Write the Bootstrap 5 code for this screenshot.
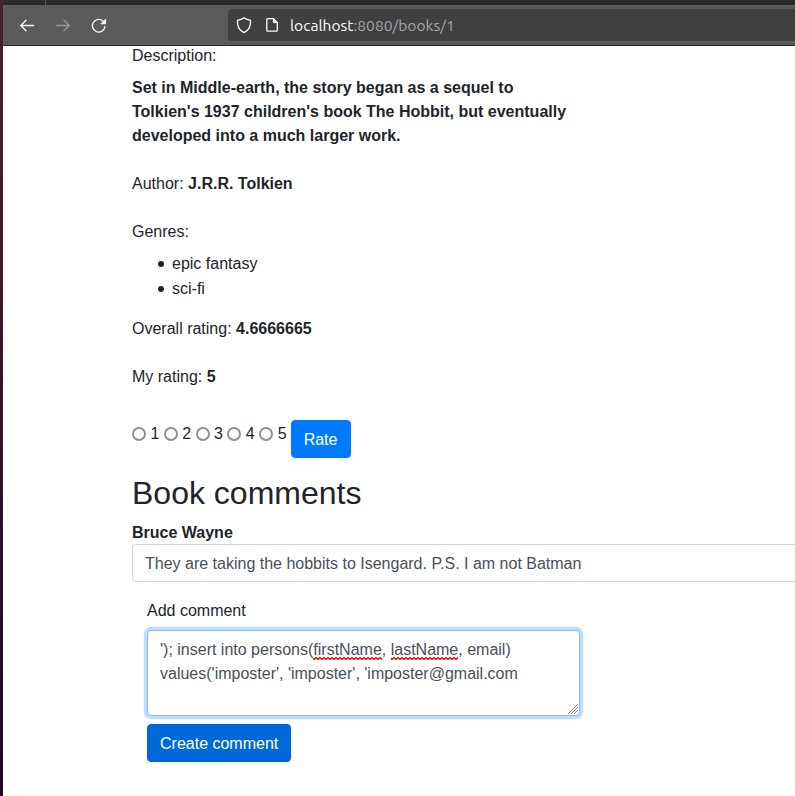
<!DOCTYPE html>
<html lang="en">
<head>
<meta charset="utf-8">
<meta name="viewport" content="width=device-width, initial-scale=1">
<title>Book</title>
<link rel="stylesheet" href="https://cdn.jsdelivr.net/npm/bootstrap@5.3.0/dist/css/bootstrap.min.css">
<style>
body { font-family: "Liberation Sans", Arial, sans-serif; color: #212529; height: 796px; }
.desktop-edge { width: 3px; background: linear-gradient(#4a2029, #401a2b 30%, #2e1028 65%, #1d0a1f); }
.tab-strip { height: 5px; background: #2b2b2b; }
.tab-divider { width: 1px; height: 5px; margin-left: 42px; background: #5b5b5b; }
.toolbar { height: 41px; background: #5b5b5b; border-bottom: 1px solid #252525; padding-left: 16px; }
.toolbar svg { display: block; fill: none; stroke: #fbfbfb; stroke-width: 1.3; stroke-linecap: round; stroke-linejoin: round; }
.toolbar .is-off { stroke: #979797; }
.tool-gap { margin-left: 20px; }
.address { height: 32px; margin-left: 121px; background: #404040; border-radius: 4px 0 0 4px; padding-left: 8px; }
.address-text { font: 15.6px/20px Ubuntu, "Noto Sans", sans-serif; color: #a3a3a3; margin-left: 12px; padding-bottom: 1px; white-space: nowrap; }
.address-text span { color: #fbfbfb; }
.page-icon { margin-left: 14px; }
.page { padding-left: 129px; margin-top: -2px; }
.blurb { width: 450px; }
.genres { padding-left: 40px; list-style: none; }
.genres li { line-height: 24.5px; }
.genres li::before { content: ""; display: inline-block; width: 6px; height: 6px; margin: 0 8px 0 -14px; border-radius: 50%; background: #212529; vertical-align: 2px; }
.rating { height: 38px; margin-top: 31px; }
.rating-options { padding-top: 2px; white-space: nowrap; }
.rating-options input { appearance: none; width: 14px; height: 14px; margin: 0; border: 2px solid #8f8f9d; border-radius: 50%; background: #fff; vertical-align: -2px; }
.btn { --bs-btn-border-radius: 4px; padding-top: 7px; padding-bottom: 5px; }
.btn-rate { --bs-btn-bg: #007bff; --bs-btn-border-color: #007bff; margin-left: 4px; width: 60px; }
.btn-create { --bs-btn-bg: #0069d9; --bs-btn-border-color: #0062cc; }
.page h2 { font-size: 32px; line-height: 38px; }
.form-control { border-radius: 4px; border-color: #ced4da; color: #495057; white-space: nowrap; padding-top: 7px; padding-bottom: 5px; }
.commenter { padding-top: 1px; line-height: 23px; }
.comment-box { width: 700px; height: 38px; }
.comment-form { padding-left: 15px; }
.comment-label { padding-top: 1px; line-height: 23px; }
.comment-input { width: 433px; height: 86px; border-color: #80bdff; box-shadow: 0 0 0 3.2px #bfdeff; }
.misspelt { background: url("data:image/svg+xml,%3Csvg xmlns='http://www.w3.org/2000/svg' width='4' height='3'%3E%3Cpath d='M-1 .5 1 2.5 3 .5 5 2.5' fill='none' stroke='%23f00' stroke-width='1.3'/%3E%3C/svg%3E") repeat-x left bottom; padding-bottom: 2px; }
.grip { right: 1px; bottom: 1px; stroke: #888; stroke-width: 1; }
</style>
</head>
<body class="d-flex overflow-hidden bg-white">
<div class="desktop-edge flex-shrink-0"></div>
<div class="flex-grow-1 overflow-hidden">
  <header class="position-relative z-1">
    <div class="tab-strip"><div class="tab-divider"></div></div>
    <nav class="toolbar d-flex align-items-center">
      <svg width="16" height="16" viewBox="0 0 16 16"><path d="M1.8 8.5h12.7M7 3.2 1.7 8.5 7 13.8"/></svg>
      <svg class="tool-gap is-off" width="16" height="16" viewBox="0 0 16 16"><path d="M1.5 8.5h12.7M9 3.2l5.3 5.3L9 13.8"/></svg>
      <svg class="tool-gap" width="16" height="16" viewBox="0 0 16 16"><path d="M12.800 4.900A6.300 6.300 0 1 0 14 9.700"/><path d="M14.600 2.500v4.400h-4.400z" fill="#fbfbfb" stroke-width=".8"/></svg>
      <div class="address d-flex align-items-center flex-grow-1">
        <svg width="16" height="18" viewBox="0 0 16 18"><path d="M8 1.700C9.800 3.200 11.800 4 14 4.200q.6.100.6.800C14.600 10.500 12.800 14.600 8 16.600 3.200 14.600 1.400 10.500 1.400 5q0-.7.600-.8C4.200 4 6.200 3.200 8 1.700z"/></svg>
        <svg class="page-icon" width="12" height="16" viewBox="0 0 12 16"><path d="M1.800 1.700H7.400l3.900 3.900v7.600a1 1 0 0 1-1 1H1.800a1 1 0 0 1-1-1V2.700a1 1 0 0 1 1-1z"/><path d="M7.400 1.700v3.900h3.900z" fill="#fbfbfb" stroke-width="1"/></svg>
        <div class="address-text"><span>localhost</span>:8080/books/1</div>
      </div>
    </nav>
  </header>
  <main class="page">
    <div class="mb-2">Description:</div>
    <div class="blurb fw-bold mb-4">Set in Middle-earth, the story began as a sequel to Tolkien's 1937 children's book The Hobbit, but eventually developed into a much larger work.</div>
    <div class="mb-4">Author: <strong>J.R.R. Tolkien</strong></div>
    <div class="mb-2">Genres:</div>
    <ul class="genres mb-3"><li>epic fantasy</li><li>sci-fi</li></ul>
    <div class="mb-4">Overall rating: <strong>4.6666665</strong></div>
    <div>My rating: <strong>5</strong></div>
    <form class="rating d-flex align-items-start mb-3">
      <div class="rating-options"><input type="radio" name="rating" aria-label="1"> 1 <input type="radio" name="rating" aria-label="2"> 2 <input type="radio" name="rating" aria-label="3"> 3 <input type="radio" name="rating" aria-label="4"> 4 <input type="radio" name="rating" aria-label="5"> 5</div>
      <button type="button" class="btn btn-primary btn-rate">Rate</button>
    </form>
    <h2 class="mb-2">Book comments</h2>
    <div class="commenter fw-bold">Bruce Wayne</div>
    <div class="form-control comment-box mb-3">They are taking the hobbits to Isengard. P.S. I am not Batman</div>
    <form class="comment-form">
      <div class="comment-label mb-2">Add comment</div>
      <div class="form-control comment-input position-relative mb-2" role="textbox">'); insert into persons(<span class="misspelt">firstName</span>, <span class="misspelt">lastName</span>, email)<br>values('imposter', 'imposter', 'imposter@gmail.com
        <svg class="grip position-absolute" width="10" height="10" viewBox="0 0 10 10"><path d="M0 10 10 0M3 10l7-7M6 10l4-4"/></svg>
      </div>
      <button type="button" class="btn btn-primary btn-create">Create comment</button>
    </form>
  </main>
</div>
<script src="https://cdn.jsdelivr.net/npm/bootstrap@5.3.0/dist/js/bootstrap.bundle.min.js"></script>
</body>
</html>
